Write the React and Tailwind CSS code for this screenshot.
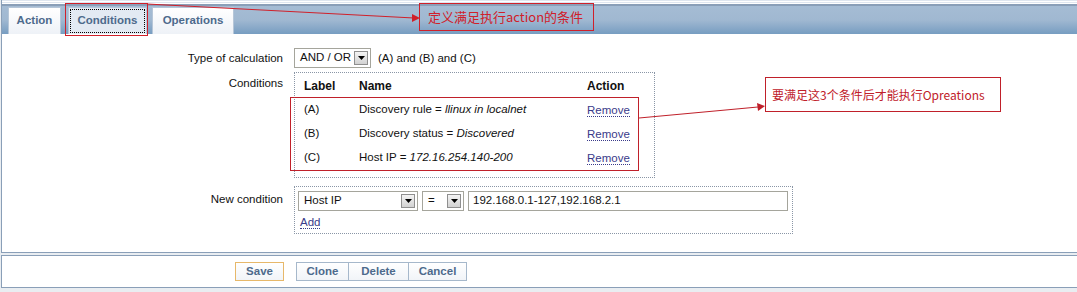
import React from "react";

/* ─── Small pieces ───────────────────────────────────────────── */
function DropArrow() {
  return (
    <span className="w-[14px] h-[14px] border border-[#8f8f8f] bg-gradient-to-b from-[#f4f4f4] to-[#d2d2d2] flex items-center justify-center">
      <svg width="7" height="4" viewBox="0 0 7 4">
        <polygon points="0,0 7,0 3.5,4" fill="#000" />
      </svg>
    </span>
  );
}

function Select({ value, className = "" }) {
  return (
    <div className={`h-[20px] border border-[#a5a59c] bg-white flex items-center justify-between pl-[5px] pr-[2px] ${className}`}>
      <span>{value}</span>
      <DropArrow />
    </div>
  );
}

function LinkText({ children }) {
  return (
    <span className="text-[#3a3a8a] border-b border-dotted border-[#3a3a8a] leading-[12px]">{children}</span>
  );
}

function Tab({ label, active, className = "" }) {
  return (
    <div
      className={`h-[27px] flex items-stretch border border-b-0 border-[#b6c6d8] font-bold text-[#4d6a8c] text-[11.5px] ${
        active ? "bg-[#e3eaf3]" : "bg-gradient-to-b from-[#ffffff] to-[#eef2f7]"
      } ${className}`}
    >
      <span
        className={`flex-1 flex items-center justify-center ${
          active ? "m-[1px] border border-dotted border-black" : ""
        }`}
      >
        {label}
      </span>
    </div>
  );
}

function Row({ label, name, value }) {
  return (
    <div className="h-[24px] flex items-center">
      <span className="w-[55px]">{label}</span>
      <span className="w-[228px]">
        {name} = <i>{value}</i>
      </span>
      <LinkText>Remove</LinkText>
    </div>
  );
}

/* ─── Page ───────────────────────────────────────────────────── */
export default function App() {
  return (
    <div
      className="relative w-[1077px] h-[292px] overflow-hidden bg-[#e9edf1] text-[11.5px] text-[#111]"
      style={{ fontFamily: '"Liberation Sans", Arial, "Noto Sans CJK SC", sans-serif' }}
    >
      {/* Main panel */}
      <div className="h-[253px] bg-white border-l border-b border-[#8a9fb8] ml-[1px] flex flex-col">
        {/* top strips */}
        <div className="h-[1px] bg-[#dfe6ef]" />
        <div className="h-[1px] bg-white" />
        <div className="h-[1px] bg-[#dfe6ef]" />
        <div className="h-[1px] bg-white" />
        <div className="h-[2px] bg-[#8a9fb8]" />
        {/* tab bar */}
        <div className="h-[28px] bg-gradient-to-b from-[#a5bcd4] via-[#a0b8d1] to-[#779dc1] flex items-end pl-[6px]">
          <Tab label="Action" className="w-[53px]" />
          <Tab label="Conditions" active className="w-[79px] ml-[7px]" />
          <Tab label="Operations" className="w-[82px] ml-[5px]" />
        </div>

        {/* form */}
        <div className="flex flex-col pt-[14px]">
          <div className="flex items-center h-[20px]">
            <div className="w-[281px] text-right pt-[1px]">Type of calculation</div>
            <div className="ml-[11px] flex items-center gap-[7px]">
              <Select value="AND / OR" className="w-[77px]" />
              <span className="pt-[1px]">(A) and (B) and (C)</span>
            </div>
          </div>

          <div className="flex mt-[4px]">
            <div className="w-[281px] text-right pt-[3px]">Conditions</div>
            <div className="ml-[11px] w-[361px] h-[106px] border border-dotted border-[#8a96a6] pl-[9px] pt-[5px]">
              <div className="h-[15px] flex items-center font-bold text-[12px]">
                <span className="w-[55px]">Label</span>
                <span className="w-[228px]">Name</span>
                <span>Action</span>
              </div>
              <div className="mt-[5px]">
                <Row label="(A)" name="Discovery rule" value="llinux in localnet" />
                <Row label="(B)" name="Discovery status" value="Discovered" />
                <Row label="(C)" name="Host IP" value="172.16.254.140-200" />
              </div>
            </div>
          </div>

          <div className="flex mt-[8px]">
            <div className="w-[281px] text-right pt-[5px]">New condition</div>
            <div className="ml-[11px] w-[499px] h-[48px] border border-dotted border-[#8a96a6] pl-[3px] pt-[4px]">
              <div className="flex items-center gap-[4px]">
                <Select value="Host IP" className="w-[120px]" />
                <Select value="=" className="w-[42px]" />
                <div className="h-[20px] w-[320px] border border-[#a5a59c] flex items-center pl-[4px]">192.168.0.1-127,192.168.2.1</div>
              </div>
              <div className="mt-[3px] pl-[2px]">
                <LinkText>Add</LinkText>
              </div>
            </div>
          </div>
        </div>
      </div>

      {/* Footer panel */}
      <div className="mt-[2px] h-[33px] bg-white border border-r-0 border-[#8a9fb8] ml-[1px] flex items-center">
        <div className="ml-[233px] h-[19px] w-[49px] border border-[#e7b86a] bg-gradient-to-b from-white to-[#f1f4f8] flex items-center justify-center font-bold text-[#4d6a8c]">
          Save
        </div>
        <div className="ml-[12px] flex h-[19px] border border-[#a6b8cb] bg-gradient-to-b from-white to-[#f1f4f8] font-bold text-[#4d6a8c]">
          <span className="w-[52px] flex items-center justify-center border-r border-[#a6b8cb]">Clone</span>
          <span className="w-[60px] flex items-center justify-center border-r border-[#a6b8cb]">Delete</span>
          <span className="w-[57px] flex items-center justify-center">Cancel</span>
        </div>
      </div>

      {/* Annotations */}
      <div className="absolute left-[65px] top-[3px] w-[83px] h-[33px] border border-[#d0202a]" />
      <div
        className="absolute left-[419px] top-[3px] w-[175px] h-[28px] border border-[#d0202a] text-[#d0202a] text-[13px] flex items-center pl-[8px]"
        style={{ fontFamily: '"Noto Sans CJK SC", sans-serif' }}
      >
        定义满足执行action的条件
      </div>
      <div className="absolute left-[290px] top-[97px] w-[349px] h-[74px] border border-[#c0202a]" />
      <div
        className="absolute left-[765px] top-[77px] w-[236px] h-[35px] bg-white border border-[#c0202a] text-[#c0202a] text-[12px] flex items-center pl-[6px]"
        style={{ fontFamily: '"Noto Sans CJK SC", sans-serif' }}
      >
        要满足这3个条件后才能执行Opreations
      </div>
      <svg className="absolute left-0 top-0" width="1077" height="292" viewBox="0 0 1077 292">
        <line x1="147" y1="4" x2="414" y2="18" stroke="#d0202a" strokeWidth="1" />
        <polygon points="412,14 420,18 412,22" fill="#d0202a" />
        <line x1="639" y1="118" x2="758" y2="107" stroke="#c0202a" strokeWidth="1" />
        <polygon points="757,103 765,106 758,111" fill="#c0202a" />
      </svg>
    </div>
  );
}
